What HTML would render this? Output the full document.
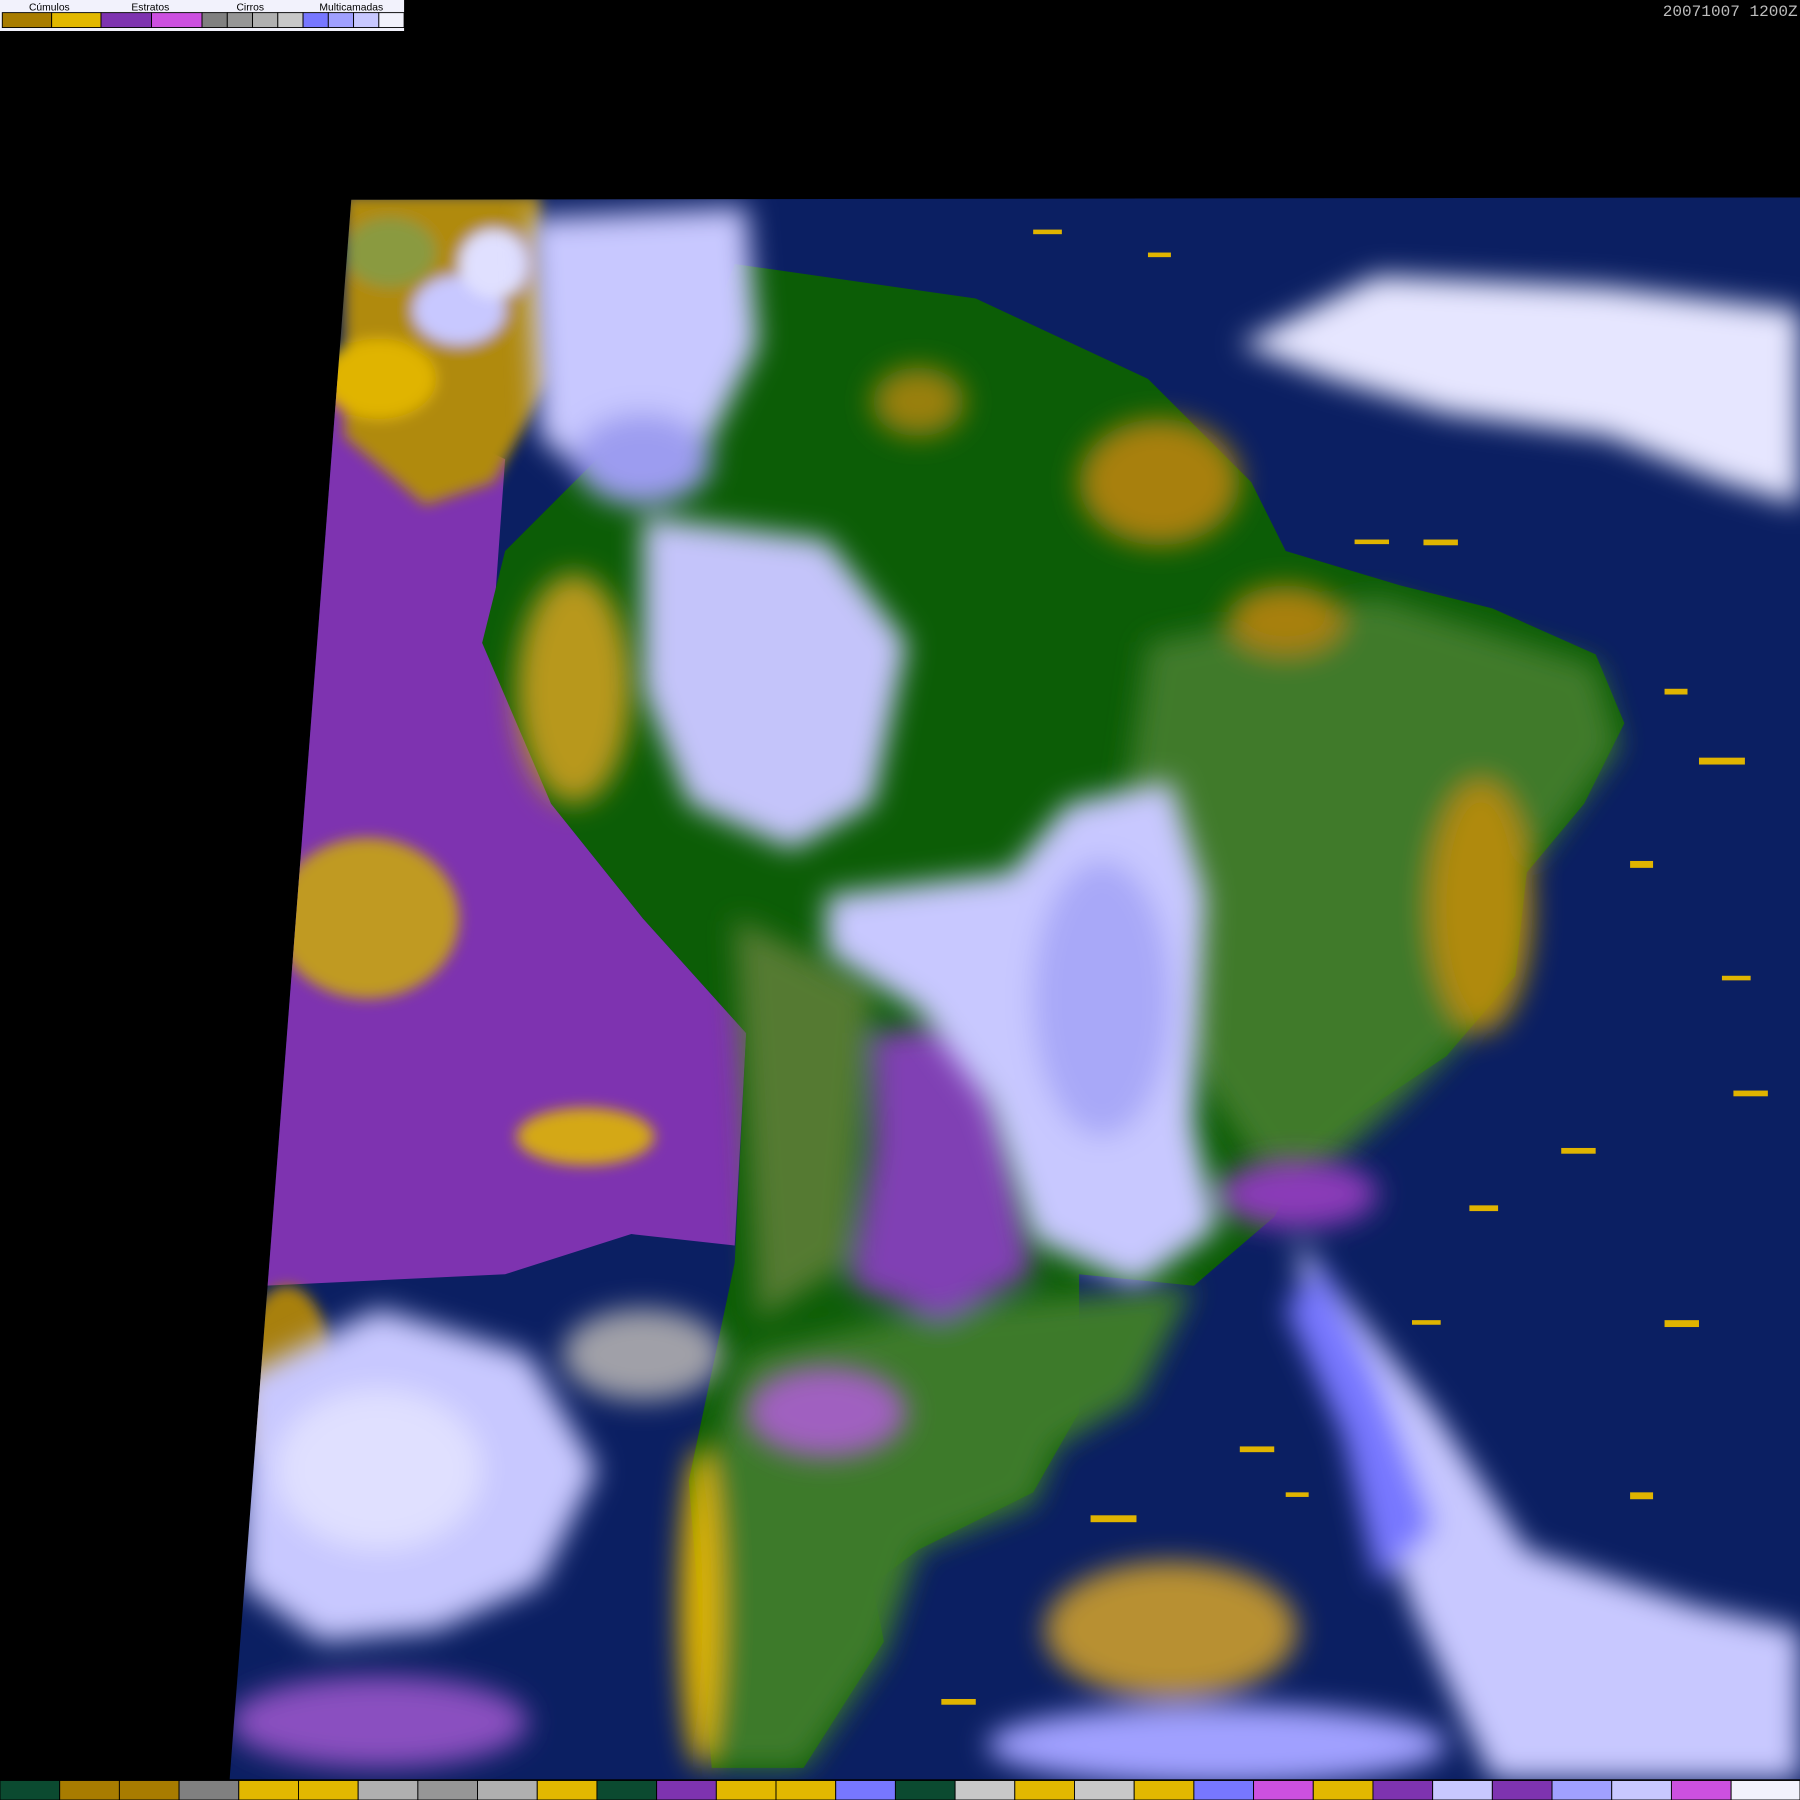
<!DOCTYPE html>
<html><head><meta charset="utf-8"><style>
html,body{margin:0;padding:0;background:#000;width:1800px;height:1800px;overflow:hidden}
svg{display:block}
</style></head><body>
<svg width="1800" height="1800" viewBox="0 0 1568 1568" xmlns="http://www.w3.org/2000/svg" font-family="Liberation Sans, sans-serif">
<defs>
<clipPath id="c"><polygon points="306,174 1568,172 1568,1550 200,1550"/></clipPath>
<filter id="b"><feGaussianBlur stdDeviation="6"/></filter>
<filter id="b2"><feGaussianBlur stdDeviation="12"/></filter>
</defs>
<rect width="1568" height="1568" fill="#000"/>
<g clip-path="url(#c)">
<rect x="190" y="160" width="1400" height="1400" fill="#0b1f62"/>
<polygon fill="#7e33b0" points="290,330 440,400 430,540 480,700 560,800 650,900 640,1085 550,1075 440,1110 230,1120 250,700"/>
<g filter="url(#b)">
<polygon fill="#b08a10" points="300,170 470,170 480,330 430,420 370,440 300,380"/>
<ellipse cx="340" cy="220" rx="40" ry="30" fill="#8a9a40"/>
<ellipse cx="400" cy="270" rx="40" ry="30" fill="#c8c8ff"/>
<ellipse cx="330" cy="330" rx="50" ry="35" fill="#e0b400"/>
<ellipse cx="430" cy="230" rx="30" ry="30" fill="#e0e0ff"/>
<ellipse cx="320" cy="800" rx="80" ry="70" fill="#c09a20"/>
<ellipse cx="510" cy="990" rx="60" ry="25" fill="#d4a818"/>
<ellipse cx="250" cy="1200" rx="40" ry="80" fill="#a88010"/>
</g>
<polygon fill="#0c5d06" points="640,230 850,260 1000,330 1090,420 1120,480 1220,510 1300,530 1390,570 1415,630 1380,700 1330,760 1320,850 1260,920 1200,960 1150,990 1110,1060 1040,1120 940,1110 940,1230 900,1300 800,1350 760,1380 770,1430 700,1540 620,1540 600,1290 640,1100 650,900 560,800 480,700 420,560 440,480 520,400 600,330"/>
<g filter="url(#b2)">
<polygon fill="#3f7a2c" points="1000,560 1200,520 1390,580 1410,650 1330,760 1320,860 1220,960 1120,1050 1020,900 980,700"/>
<polygon fill="#3d7a2a" points="820,1140 1040,1120 990,1220 920,1260 900,1310 800,1350 770,1440 700,1540 620,1540 610,1300 650,1180"/>
<polygon fill="#557a30" points="640,800 760,860 740,1100 660,1150"/>
<polygon fill="#8040b4" points="760,900 860,890 880,1000 900,1110 820,1150 740,1120 760,1000"/>
<ellipse cx="1010" cy="420" rx="70" ry="55" fill="#a8800c"/>
<ellipse cx="1290" cy="790" rx="45" ry="110" fill="#b08a10"/>
<ellipse cx="1120" cy="540" rx="50" ry="30" fill="#a8800c"/>
<ellipse cx="800" cy="350" rx="40" ry="30" fill="#9a8010"/>
<ellipse cx="610" cy="1400" rx="18" ry="140" fill="#e0b400"/>
<ellipse cx="500" cy="600" rx="50" ry="100" fill="#b8981a"/>
</g>
<g filter="url(#b2)">
<polygon fill="#c8c8ff" points="460,190 650,180 660,300 600,420 540,440 470,380"/>
<ellipse cx="560" cy="400" rx="60" ry="40" fill="#9c9cf0"/>
<polygon fill="#c4c4fa" points="560,450 720,470 790,560 760,700 690,740 600,700 560,600"/>
<polygon fill="#c8c8ff" points="720,780 880,760 930,700 1020,680 1050,780 1040,980 1060,1070 990,1120 900,1080 860,960 800,880 720,830"/>
<ellipse cx="960" cy="870" rx="60" ry="120" fill="#a8a8f8"/>
<polygon fill="#e6e6ff" points="1080,300 1200,240 1400,250 1568,270 1568,440 1500,420 1400,380 1260,360 1160,330"/>
<polygon fill="#c8c8ff" points="1130,1080 1250,1230 1330,1350 1480,1400 1568,1420 1568,1550 1300,1550 1230,1400 1190,1280 1140,1160"/>
<polygon fill="#7777ff" points="1150,1100 1200,1200 1250,1330 1200,1380 1170,1250 1120,1140"/>
<polygon fill="#c8c8ff" points="210,1200 330,1140 460,1180 520,1280 470,1380 380,1420 280,1430 210,1380"/>
<ellipse cx="330" cy="1280" rx="90" ry="70" fill="#e0e0ff"/>
<ellipse cx="560" cy="1180" rx="70" ry="40" fill="#a0a0a8"/>
<ellipse cx="1060" cy="1520" rx="200" ry="35" fill="#a0a0ff"/>
<ellipse cx="330" cy="1500" rx="130" ry="40" fill="#8a50c0"/>
<ellipse cx="1130" cy="1040" rx="70" ry="30" fill="#8a3ab8"/>
<ellipse cx="1020" cy="1420" rx="110" ry="60" fill="#b89030"/>
<ellipse cx="720" cy="1230" rx="70" ry="40" fill="#a060c0"/>
</g>
<g fill="#e0b400">
<rect x="1180" y="470" width="30" height="4"/><rect x="1450" y="600" width="20" height="5"/><rect x="1360" y="1000" width="30" height="5"/>
<rect x="1230" y="1150" width="25" height="4"/><rect x="1420" y="1300" width="20" height="6"/><rect x="950" y="1320" width="40" height="6"/>
<rect x="820" y="1480" width="30" height="5"/><rect x="1000" y="220" width="20" height="4"/><rect x="1500" y="850" width="25" height="4"/>
<rect x="1480" y="660" width="40" height="6"/><rect x="1420" y="750" width="20" height="6"/><rect x="1510" y="950" width="30" height="5"/>
<rect x="1280" y="1050" width="25" height="5"/><rect x="1450" y="1150" width="30" height="6"/><rect x="1240" y="470" width="30" height="5"/>
<rect x="900" y="200" width="25" height="4"/><rect x="1080" y="1260" width="30" height="5"/><rect x="1120" y="1300" width="20" height="4"/>
</g>
</g>
<rect x="0" y="0" width="352" height="27" fill="#f2f2fc"/>
<g font-size="9" fill="#000" text-anchor="middle">
<text x="43" y="9">Cúmulos</text><text x="131" y="9">Estratos</text><text x="218" y="9">Cirros</text><text x="306" y="9">Multicamadas</text>
</g>
<g stroke="#000" stroke-width="0.8">
<rect x="2" y="11" width="43" height="13" fill="#a87c00"/><rect x="45" y="11" width="43" height="13" fill="#e2b800"/>
<rect x="88" y="11" width="44" height="13" fill="#7e33b0"/><rect x="132" y="11" width="44" height="13" fill="#cc50e0"/>
<rect x="176" y="11" width="22" height="13" fill="#808080"/><rect x="198" y="11" width="22" height="13" fill="#969696"/>
<rect x="220" y="11" width="22" height="13" fill="#b0b0b0"/><rect x="242" y="11" width="22" height="13" fill="#c8c8c8"/>
<rect x="264" y="11" width="22" height="13" fill="#7777ff"/><rect x="286" y="11" width="22" height="13" fill="#a0a0ff"/>
<rect x="308" y="11" width="22" height="13" fill="#c8c8ff"/><rect x="330" y="11" width="22" height="13" fill="#f2f2fc"/>
</g>
<text x="1566" y="14" font-family="Liberation Mono, monospace" font-size="14" fill="#bdbdbd" text-anchor="end">20071007 1200Z</text>
<g stroke="#000" stroke-width="0.8">
<rect x="0" y="1551" width="52" height="17" fill="#0b4a30"/><rect x="52" y="1551" width="52" height="17" fill="#a87c00"/>
<rect x="104" y="1551" width="52" height="17" fill="#a87c00"/><rect x="156" y="1551" width="52" height="17" fill="#808080"/>
<rect x="208" y="1551" width="52" height="17" fill="#e2b800"/><rect x="260" y="1551" width="52" height="17" fill="#e2b800"/>
<rect x="312" y="1551" width="52" height="17" fill="#b0b0b0"/><rect x="364" y="1551" width="52" height="17" fill="#969696"/>
<rect x="416" y="1551" width="52" height="17" fill="#b0b0b0"/><rect x="468" y="1551" width="52" height="17" fill="#e2b800"/>
<rect x="520" y="1551" width="52" height="17" fill="#0b4a30"/><rect x="572" y="1551" width="52" height="17" fill="#7e33b0"/>
<rect x="624" y="1551" width="52" height="17" fill="#e2b800"/><rect x="676" y="1551" width="52" height="17" fill="#e2b800"/>
<rect x="728" y="1551" width="52" height="17" fill="#7777ff"/><rect x="780" y="1551" width="52" height="17" fill="#0b4a30"/>
<rect x="832" y="1551" width="52" height="17" fill="#c8c8c8"/><rect x="884" y="1551" width="52" height="17" fill="#e2b800"/>
<rect x="936" y="1551" width="52" height="17" fill="#c8c8c8"/><rect x="988" y="1551" width="52" height="17" fill="#e2b800"/>
<rect x="1040" y="1551" width="52" height="17" fill="#7777ff"/><rect x="1092" y="1551" width="52" height="17" fill="#cc50e0"/>
<rect x="1144" y="1551" width="52" height="17" fill="#e2b800"/><rect x="1196" y="1551" width="52" height="17" fill="#7e33b0"/>
<rect x="1248" y="1551" width="52" height="17" fill="#c8c8ff"/><rect x="1300" y="1551" width="52" height="17" fill="#7e33b0"/>
<rect x="1352" y="1551" width="52" height="17" fill="#a0a0ff"/><rect x="1404" y="1551" width="52" height="17" fill="#c8c8ff"/>
<rect x="1456" y="1551" width="52" height="17" fill="#cc50e0"/><rect x="1508" y="1551" width="60" height="17" fill="#f2f2fc"/>
</g>
</svg>
</body></html>
